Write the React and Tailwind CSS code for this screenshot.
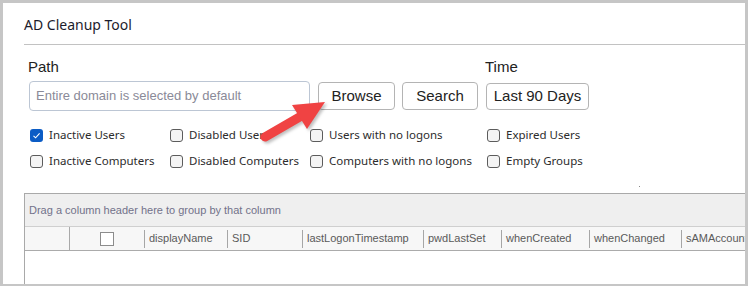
import React from "react";

const CB = ({ checked, label }) => (
  <label className="flex items-center gap-[6px] h-[26px]">
    {checked ? (
      <span className="w-[13px] h-[13px] rounded-[3px] bg-[#0b5cc5] flex items-center justify-center">
        <svg width="9" height="9" viewBox="0 0 9 9">
          <path d="M1.5 4.8 L3.6 6.8 L7.6 2.4" fill="none" stroke="#fff" strokeWidth="1.1" />
        </svg>
      </span>
    ) : (
      <span className="w-[13px] h-[13px] rounded-[3px] border border-[#5c5c5c] bg-[#f4f4f4]" />
    )}
    <span className="text-[11.5px] text-[#2c2c2c] leading-none">{label}</span>
  </label>
);

const cols = [
  { w: 45, t: "", full: true },
  { w: 75, t: "cb" },
  { w: 83, t: "displayName" },
  { w: 75, t: "SID" },
  { w: 121, t: "lastLogonTimestamp" },
  { w: 78, t: "pwdLastSet" },
  { w: 88, t: "whenCreated" },
  { w: 92, t: "whenChanged" },
  { w: 80, t: "sAMAccountName" },
];

export default function App() {
  return (
    <div className="relative w-[748px] h-[286px] overflow-hidden bg-white border-t-[3px] border-l-[3px] border-r-[3px] border-b-[2px] border-[#c6c6c6] font-['Noto_Sans',sans-serif]">
      <div className="pl-[21px] flex flex-col h-full">
        <div className="h-[42px] flex items-center border-b border-[#c2c2c2]">
          <span className="text-[14px] text-[#1c1c2c] pt-[2px]">AD Cleanup Tool</span>
        </div>

        <div className="ml-[4px] mt-[13px] flex items-start font-['Liberation_Sans',sans-serif]">
          <div className="flex flex-col">
            <span className="text-[15px] leading-[18px] h-[18px] text-[#222] mb-[5px]">Path</span>
            <div className="ml-[1px] w-[281px] h-[30px] border border-[#bcc6d4] rounded-[4px] flex items-center pl-[6px] text-[13px] text-[#8a8a98]">
              Entire domain is selected by default
            </div>
          </div>
          <button className="mt-[24px] ml-[8px] w-[77px] h-[28px] border border-[#b4b4b4] rounded-[4px] text-[15px] text-[#222] bg-white">Browse</button>
          <button className="mt-[24px] ml-[7px] w-[76px] h-[28px] border border-[#b4b4b4] rounded-[4px] text-[15px] text-[#222] bg-white">Search</button>
          <div className="ml-[7px] flex flex-col">
            <span className="text-[15px] leading-[18px] h-[18px] text-[#222] mb-[7px]">Time</span>
            <button className="ml-[1px] w-[103px] h-[27px] border border-[#b4b4b4] rounded-[4px] text-[15px] text-[#222] bg-white">Last 90 Days</button>
          </div>
        </div>

        <div className="ml-[6px] mt-[11px] grid grid-cols-[140px_140px_177px_140px]">
          <CB checked label="Inactive Users" />
          <CB label="Disabled Users" />
          <CB label="Users with no logons" />
          <CB label="Expired Users" />
          <CB label="Inactive Computers" />
          <CB label="Disabled Computers" />
          <CB label="Computers with no logons" />
          <CB label="Empty Groups" />
        </div>

        <div className="mt-[19px] flex-1 border-t border-l border-[#a9a9a9] flex flex-col font-['Liberation_Sans',sans-serif]">
          <div className="h-[33px] bg-[#efefef] border-b border-[#cfcfcf] flex items-center pl-[4px] text-[11px] text-[#72728a]">
            Drag a column header here to group by that column
          </div>
          <div className="h-[24px] bg-[#f7f7f7] border-b border-[#ababab] flex text-[11px] text-[#5a5a5a] overflow-hidden">
            {cols.map((c, i) => (
              <div key={i} className="flex items-center shrink-0 h-full overflow-hidden" style={{ width: c.w }}>
                {c.t === "cb" ? (
                  <div className="flex-1 flex justify-center">
                    <span className="w-[14px] h-[14px] border border-[#8c8c8c] bg-white" />
                  </div>
                ) : (
                  <span className="pl-[4px] whitespace-nowrap">{c.t}</span>
                )}
                {i < cols.length - 1 && (
                  <span className={c.full ? "ml-auto shrink-0 w-px h-full bg-[#a9a9a9]" : "ml-auto shrink-0 w-px h-[18px] bg-[#a6a6a6]"} />
                )}
              </div>
            ))}
          </div>
          <div className="flex-1 bg-white" />
        </div>
      </div>

      <span className="absolute left-[636px] top-[183px] w-px h-px bg-[#888]" />

      <svg className="absolute left-0 top-0 pointer-events-none" width="748" height="286" style={{ filter: "drop-shadow(2px 2px 1.5px rgba(0,0,0,0.25))" }}>
        <line x1="262" y1="134" x2="300" y2="112" stroke="#f04343" strokeWidth="9" strokeLinecap="round" />
        <polygon points="289,102 322,99 304,126" fill="#f04343" />
      </svg>
    </div>
  );
}
